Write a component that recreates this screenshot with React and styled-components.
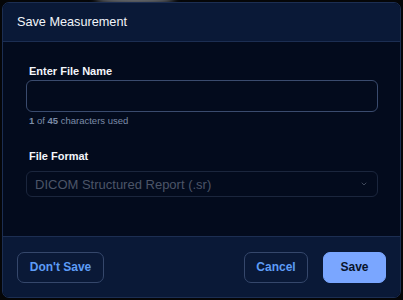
import React, { useState } from 'react';
import styled, { createGlobalStyle } from 'styled-components';

const Global = createGlobalStyle`
  html, body {
    margin: 0;
    padding: 0;
    background: #050608;
    font-family: "Liberation Sans", Arial, sans-serif;
  }
  * { box-sizing: border-box; }
`;

const Page = styled.div`
  width: 403px;
  height: 300px;
  padding: 2px;
  position: relative;
  overflow: hidden;
`;

// grey thing peeking behind the dialog at the top
const Blur = styled.div`
  position: absolute;
  top: -8px;
  left: 95px;
  width: 80px;
  height: 12px;
  border-radius: 50%;
  background: #6c6f74;
  filter: blur(3px);
`;

const Dialog = styled.div`
  position: relative;
  display: flex;
  flex-direction: column;
  height: 296px;
  border: 1px solid #1c2e52;
  border-radius: 7px;
  overflow: hidden;
  background: #030b1d;
`;

const Header = styled.div`
  height: 39px;
  padding: 0 14px;
  display: flex;
  align-items: center;
  background: #0a1937;
  border-bottom: 1px solid #1c2e52;
  color: #f2f5fa;
  font-size: 12.7px;
`;

const Body = styled.div`
  flex: 1;
  padding: 23px 22px 0 23px;
  display: flex;
  flex-direction: column;
`;

const Label = styled.div`
  color: #f4f6fb;
  font-size: 11px;
  line-height: 13px;
  font-weight: 700;
  padding-left: 3px;
  margin-bottom: ${(p) => p.$gap}px;
`;

const Input = styled.input`
  width: 352px;
  height: 32px;
  border: 1px solid #3a4b6e;
  border-radius: 6px;
  background: transparent;
  color: #fff;
  outline: none;
  padding: 0 8px;
`;

const Help = styled.div`
  margin-top: 3px;
  padding-left: 3px;
  font-size: 9.5px;
  line-height: 11px;
  color: #7c8ca8;
  b { font-weight: 700; }
`;

const Field = styled.div`
  display: flex;
  flex-direction: column;
  margin-bottom: ${(p) => p.$gap || 0}px;
`;

const Select = styled.div`
  width: 352px;
  height: 26px;
  border: 1px solid #1b263d;
  border-radius: 6px;
  display: flex;
  align-items: center;
  justify-content: space-between;
  padding: 0 9px 0 8px;
  color: #4c5568;
  font-size: 13px;
`;

const Footer = styled.div`
  height: 61px;
  background: #0a1937;
  border-top: 1px solid #1c2e52;
  display: flex;
  align-items: center;
  padding: 0 14px;
  gap: 15px;
`;

const Spacer = styled.div`
  flex: 1;
`;

const Button = styled.button`
  height: 31px;
  width: ${(p) => p.$w}px;
  border-radius: 7px;
  font-family: inherit;
  font-size: 12px;
  font-weight: 700;
  border: 1px solid ${(p) => (p.$primary ? '#7aa6ff' : '#35476b')};
  background: ${(p) => (p.$primary ? '#7aa6ff' : 'transparent')};
  color: ${(p) => (p.$primary ? '#08132b' : '#5d9cf6')};
  cursor: pointer;
`;

export default function App() {
  const [name, setName] = useState('');
  return (
    <Page>
      <Global />
      <Blur />
      <Dialog>
        <Header>Save Measurement</Header>
        <Body>
          <Field $gap={24}>
            <Label $gap={2}>Enter File Name</Label>
            <Input value={name} onChange={(e) => setName(e.target.value)} />
            <Help>
              <b>1</b> of <b>45</b> characters used
            </Help>
          </Field>
          <Field>
            <Label $gap={8}>File Format</Label>
            <Select>
              DICOM Structured Report (.sr)
              <svg width="8" height="8" viewBox="0 0 24 24" fill="none" stroke="#4c5568" strokeWidth="2.5" strokeLinecap="round" strokeLinejoin="round">
                <path d="M6 9l6 6 6-6" />
              </svg>
            </Select>
          </Field>
        </Body>
        <Footer>
          <Button $w={87}>Don't Save</Button>
          <Spacer />
          <Button $w={64}>Cancel</Button>
          <Button $w={63} $primary>Save</Button>
        </Footer>
      </Dialog>
    </Page>
  );
}
